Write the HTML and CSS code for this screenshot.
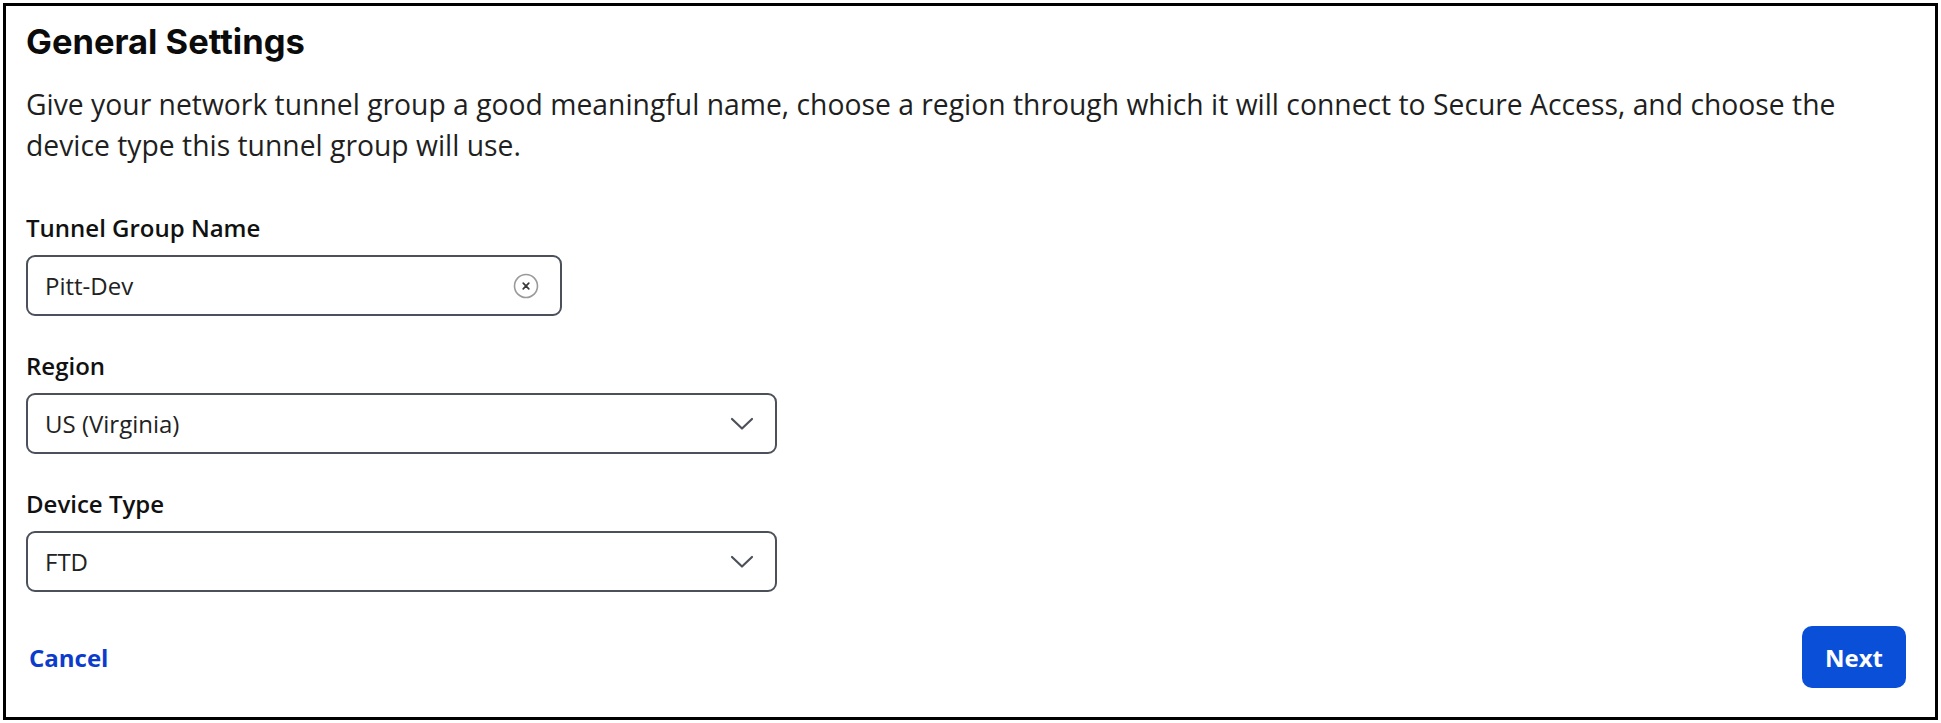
FILE: index.html
```html
<!DOCTYPE html>
<html lang="en">
<head>
<meta charset="utf-8">
<title>General Settings</title>
<link rel="stylesheet" href="styles.css">
</head>
<body>
<div class="frame">
  <h1 class="title">General Settings</h1>
  <p class="desc">Give your network tunnel group a good meaningful name, choose a region through which it will connect to Secure Access, and choose the device type this tunnel group will use.</p>

  <div class="field field-first">
    <div class="label">Tunnel Group Name</div>
    <div class="control control-input">
      <span class="value">Pitt-Dev</span>
      <svg class="clear-icon" width="26" height="26" viewBox="0 0 26 26" aria-hidden="true">
        <circle cx="13" cy="13" r="11.5" fill="none" stroke="#9a9a9a" stroke-width="1.6"/>
        <path d="M10.2 10.2 L15.8 15.8 M15.8 10.2 L10.2 15.8" stroke="#3a3a3a" stroke-width="1.7" stroke-linecap="round"/>
      </svg>
    </div>
  </div>

  <div class="field">
    <div class="label">Region</div>
    <div class="control control-select">
      <span class="value">US (Virginia)</span>
      <svg class="chevron" width="24" height="14" viewBox="0 0 24 14" aria-hidden="true">
        <path d="M2 2 L12 11.5 L22 2" fill="none" stroke="#4b505a" stroke-width="2.2" stroke-linecap="round" stroke-linejoin="round"/>
      </svg>
    </div>
  </div>

  <div class="field">
    <div class="label">Device Type</div>
    <div class="control control-select">
      <span class="value">FTD</span>
      <svg class="chevron" width="24" height="14" viewBox="0 0 24 14" aria-hidden="true">
        <path d="M2 2 L12 11.5 L22 2" fill="none" stroke="#4b505a" stroke-width="2.2" stroke-linecap="round" stroke-linejoin="round"/>
      </svg>
    </div>
  </div>

  <div class="footer">
    <a class="cancel">Cancel</a>
    <button class="next">Next</button>
  </div>
</div>
</body>
</html>
```

FILE: styles.css
```css
html, body {
  margin: 0;
  padding: 0;
  background: #ffffff;
}

body {
  width: 1941px;
  height: 723px;
  overflow: hidden;
}

.frame {
  box-sizing: border-box;
  margin: 3px;
  width: 1935px;
  height: 717px;
  border: 3px solid #000000;
  padding: 16px 29px 29px 20px;
  display: flex;
  flex-direction: column;
  font-family: "Open Sans", "Noto Sans", sans-serif;
  color: #1d1d1d;
}

.title {
  margin: 0;
  font-family: Inter, "Open Sans", sans-serif;
  font-weight: 700;
  font-size: 34.5px;
  line-height: 40px;
  letter-spacing: 0;
  color: #0b0b0b;
}

.desc {
  margin: 22px 0 0 0;
  max-width: 1840px;
  font-size: 28.3px;
  line-height: 41px;
  color: #1f1f1f;
}

.field {
  display: flex;
  flex-direction: column;
  align-items: flex-start;
  margin-top: 35px;
}

.field-first {
  margin-top: 47px;
}

.label {
  font-size: 24px;
  font-weight: 600;
  line-height: 30px;
  color: #111111;
  margin-bottom: 12px;
}

.control {
  box-sizing: border-box;
  height: 61px;
  border: 2px solid #4b505a;
  border-radius: 9px;
  display: flex;
  align-items: center;
  padding: 0 21px 0 17px;
  font-size: 24px;
  color: #222222;
}

.control-input {
  width: 536px;
}

.control-select {
  width: 751px;
  padding-right: 21px;
}

.value {
  flex: 1;
}

.clear-icon {
  flex: none;
  display: block;
}

.chevron {
  flex: none;
  display: block;
}

.footer {
  margin-top: auto;
  display: flex;
  align-items: center;
  justify-content: space-between;
}

.cancel {
  margin-left: 3px;
  font-size: 24px;
  font-weight: 700;
  color: #0b3ccc;
  cursor: pointer;
}

.next {
  width: 104px;
  height: 62px;
  border: none;
  border-radius: 10px;
  background: #0a4fd8;
  color: #ffffff;
  font-family: "Open Sans", "Noto Sans", sans-serif;
  font-size: 24px;
  font-weight: 700;
  padding: 0;
  cursor: pointer;
}
```
